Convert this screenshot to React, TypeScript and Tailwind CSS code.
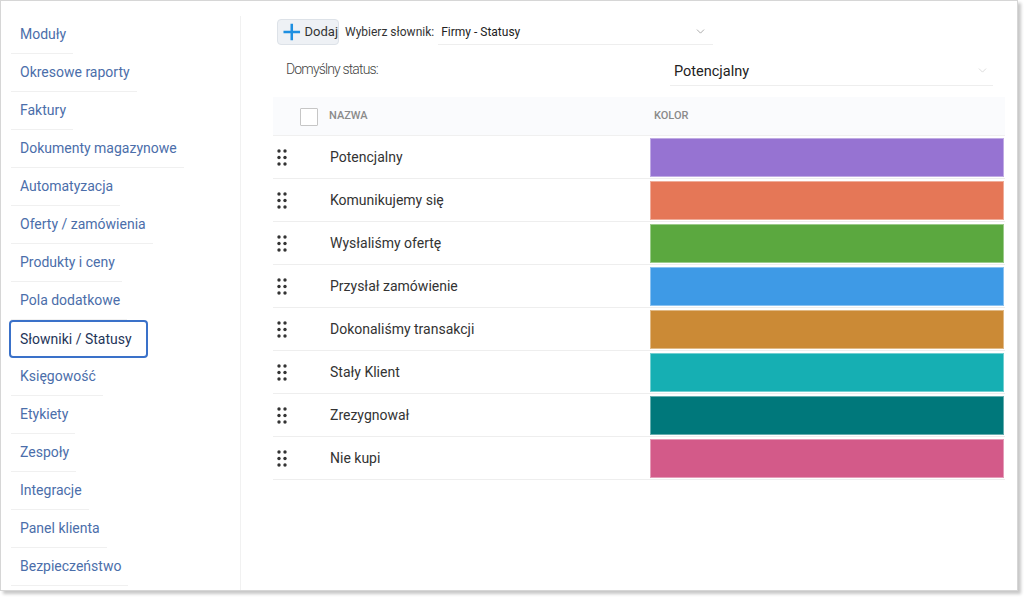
import { ChevronDown } from 'lucide-react';

const menu = [
  'Moduły',
  'Okresowe raporty',
  'Faktury',
  'Dokumenty magazynowe',
  'Automatyzacja',
  'Oferty / zamówienia',
  'Produkty i ceny',
  'Pola dodatkowe',
  'Słowniki / Statusy',
  'Księgowość',
  'Etykiety',
  'Zespoły',
  'Integracje',
  'Panel klienta',
  'Bezpieczeństwo',
];

const statuses = [
  { name: 'Potencjalny', color: 'bg-[#9673d2]' },
  { name: 'Komunikujemy się', color: 'bg-[#e57757]' },
  { name: 'Wysłaliśmy ofertę', color: 'bg-[#5ba83f]' },
  { name: 'Przysłał zamówienie', color: 'bg-[#3e9ae6]' },
  { name: 'Dokonaliśmy transakcji', color: 'bg-[#cb8a36]' },
  { name: 'Stały Klient', color: 'bg-[#16afb3]' },
  { name: 'Zrezygnował', color: 'bg-[#00787b]' },
  { name: 'Nie kupi', color: 'bg-[#d35a89]' },
];

function DragHandle() {
  return (
    <svg width="10" height="17" viewBox="0 0 10 17" className="text-[#333]">
      {[2, 8.5, 15].map((y) => (
        <g key={y}>
          <circle cx="2" cy={y} r="1.7" fill="currentColor" />
          <circle cx="8" cy={y} r="1.7" fill="currentColor" />
        </g>
      ))}
    </svg>
  );
}

function PlusIcon() {
  return (
    <svg width="18" height="18" viewBox="0 0 18 18">
      <path d="M9 0.5v17M0.5 9h17" stroke="#1d8fe1" strokeWidth="2.6" fill="none" />
    </svg>
  );
}

export default function App() {
  return (
    <div className="w-[1024px] h-[598px] bg-white font-['Roboto','Liberation_Sans',sans-serif]">
      <div className="w-[1018px] h-[591px] border border-[#d6d6d6] bg-white shadow-[3px_3px_3px_rgba(0,0,0,0.22)] flex">
        {/* Sidebar */}
        <div className="w-[240px] shrink-0 pt-[15px]">
          <div className="h-full border-r border-[#f1f1f1] pl-[10px] flex flex-col items-start">
            {menu.map((item) =>
              item === 'Słowniki / Statusy' ? (
                <div
                  key={item}
                  className="ml-[-2px] h-[38px] pl-[9px] pr-[14px] flex items-center border-2 border-[#3a71c9] rounded-[4px] text-[14px] leading-[20px] text-[#1f3559]"
                >
                  {item}
                </div>
              ) : (
                <div
                  key={item}
                  className="pt-[8px] pb-[9px] pl-[9px] pr-[7px] border-b border-[#f0f0f0] text-[14px] leading-[20px] text-[#4b6eaa]"
                >
                  {item}
                </div>
              )
            )}
          </div>
        </div>

        {/* Main */}
        <div className="flex-1 pl-[32px] pr-[11px] pt-[17px]">
          <div className="flex items-center pl-[4px] h-[27px]">
            <button className="h-[26px] w-[62px] flex items-center gap-[4px] pl-[5px] bg-[#eef1f5] border border-[#dde2e8] rounded-[4px] text-[13px] text-[#333]">
              <PlusIcon />
              Dodaj
            </button>
            <span className="ml-[6px] text-[12px] text-[#333]">Wybierz słownik:</span>
            <div className="ml-[4px] w-[275px] h-[27px] border-b border-[#eeeeee] flex items-center justify-between pl-[3px] pr-[6px]">
              <span className="pt-[2px] text-[12px] text-[#222]">Firmy - Statusy</span>
              <ChevronDown size={13} strokeWidth={1.5} className="text-[#999]" />
            </div>
          </div>

          <div className="mt-[11px] flex items-start">
            <div className="w-[397px] pl-[13px] pt-[3px] text-[14px] font-light tracking-[-0.85px] text-[#444]">
              Domyślny status:
            </div>
            <div className="w-[323px] h-[30px] border-b border-[#eeeeee] flex items-center justify-between pl-[4px] pr-[4px]">
              <span className="pt-[3px] text-[14.5px] text-[#222]">Potencjalny</span>
              <ChevronDown size={13} strokeWidth={1.2} className="text-[#c8c8c8]" />
            </div>
          </div>

          <div className="mt-[11px] w-[732px]">
            <div className="h-[39px] bg-[#fafbfd] border-b border-[#f0f0f0] flex items-center">
              <div className="ml-[27px] mt-[2px] w-[18px] h-[18px] border-[1.5px] border-[#c6c6c6] bg-white rounded-[1px]" />
              <div className="ml-[11px] w-[321px] text-[11px] font-medium text-[#8a8a8a]">NAZWA</div>
              <div className="pl-[4px] text-[11px] font-medium text-[#8a8a8a]">KOLOR</div>
            </div>
            {statuses.map((s) => (
              <div key={s.name} className="h-[43px] border-b border-[#eeeeee] flex items-center">
                <div className="w-[57px] pl-[4px] flex items-center">
                  <DragHandle />
                </div>
                <div className="w-[320px] text-[14px] text-[#333]">{s.name}</div>
                <div className={`flex-1 mr-[1px] h-[39px] ${s.color} border border-white/40`} />
              </div>
            ))}
          </div>
        </div>
      </div>
    </div>
  );
}
